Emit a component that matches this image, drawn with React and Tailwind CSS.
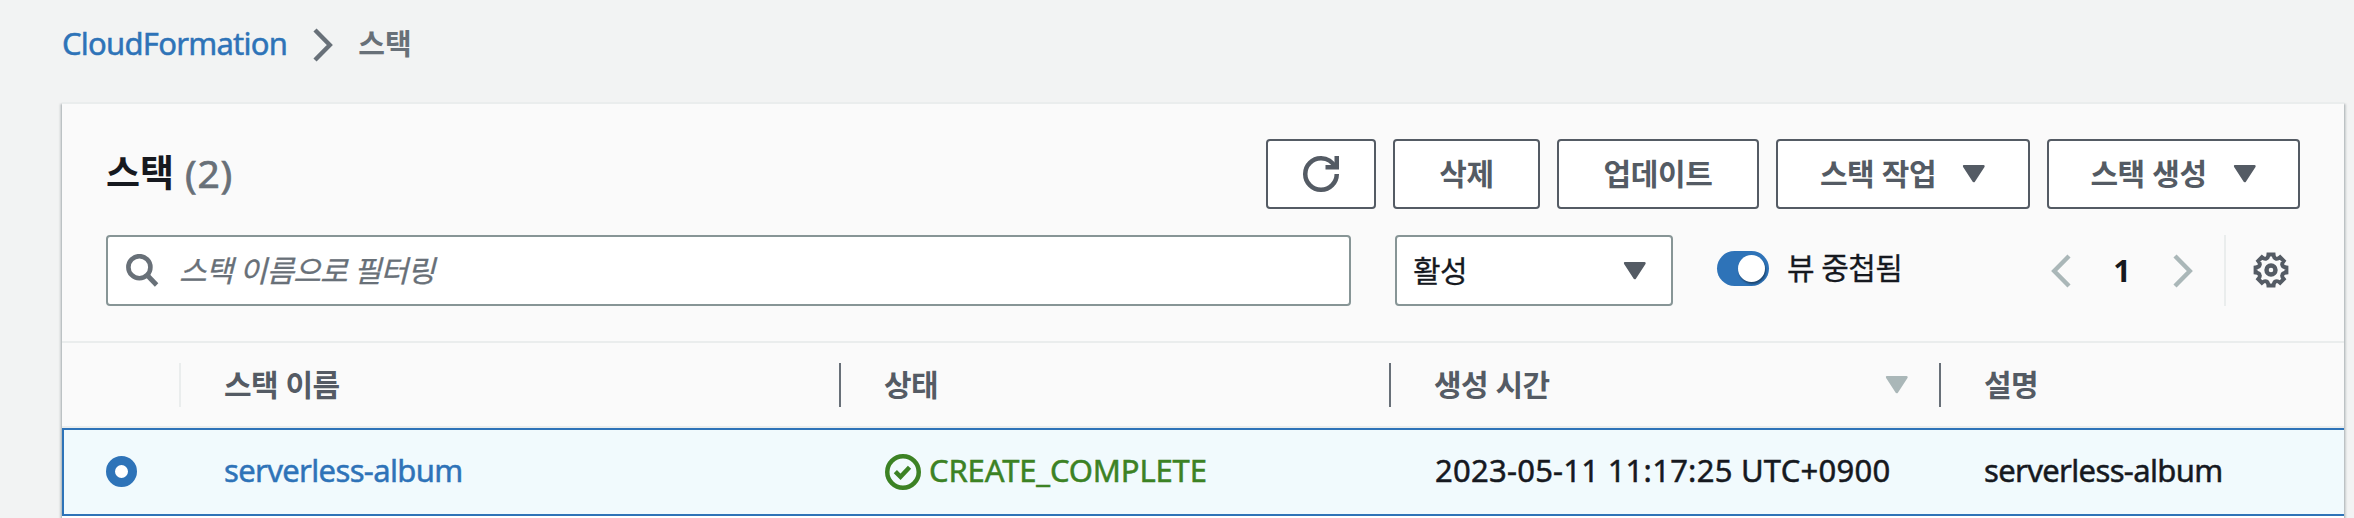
function Chevron({ direction = 'right', className = '' }) {
  return (
    <svg width="20" height="34" viewBox="0 0 20 34" fill="none" className={className}>
      <path
        d={direction === 'right' ? 'M2 2l14.8 15L2 32' : 'M18 2L3.2 17 18 32'}
        stroke="currentColor"
        strokeWidth="4.4"
      />
    </svg>
  );
}

function Caret({ className = '' }) {
  return (
    <svg width="24" height="20" viewBox="0 0 24 20" className={className}>
      <path d="M2.2 2.2h19.2L11.8 17z" fill="currentColor" stroke="currentColor" strokeWidth="2.6" strokeLinejoin="round" />
    </svg>
  );
}

function RefreshIcon() {
  return (
    <svg width="36" height="36" viewBox="0 0 16 16" fill="none" stroke="currentColor" strokeWidth="2">
      <path d="M10 5h5V0" />
      <path d="M15 8a6.957 6.957 0 0 1-7 7 6.957 6.957 0 0 1-7-7 6.957 6.957 0 0 1 7-7 6.87 6.87 0 0 1 6.3 4" />
    </svg>
  );
}

function SearchIcon() {
  return (
    <svg width="33" height="33" viewBox="0 0 33 33" fill="none" stroke="currentColor" className="shrink-0">
      <circle cx="13.4" cy="13.2" r="11" strokeWidth="4.6" />
      <path d="M21 21l9.6 10" strokeWidth="4.8" />
    </svg>
  );
}

function CheckIcon() {
  return (
    <svg width="36" height="36" viewBox="0 0 16 16" fill="none" stroke="currentColor" strokeWidth="2" className="shrink-0">
      <circle cx="8" cy="8" r="7" />
      <path d="M4.6 7.8l2.3 2.3 4-4.2" />
    </svg>
  );
}

const gearPoint = (degrees, radius) => {
  const a = (degrees * Math.PI) / 180;
  return `${(18 + radius * Math.sin(a)).toFixed(2)} ${(18 - radius * Math.cos(a)).toFixed(2)}`;
};

const gearPath =
  Array.from({ length: 8 }, (_, i) => {
    const c = i * 45;
    return `${i ? 'L' : 'M'}${gearPoint(c - 9.5, 15.6)}L${gearPoint(c + 9.5, 15.6)}Q${gearPoint(c + 14, 12.2)} ${gearPoint(c + 22.5, 12.4)}Q${gearPoint(c + 31, 12.2)} ${gearPoint(c + 35.5, 15.6)}`;
  }).join('') + 'Z';

function GearIcon() {
  return (
    <svg width="36" height="36" viewBox="0 0 36 36" fill="none" stroke="currentColor">
      <path d={gearPath} strokeWidth="4" />
      <circle cx="18" cy="18" r="4.5" strokeWidth="4.4" />
    </svg>
  );
}

function Button({ className, children }) {
  return (
    <button
      className={`flex h-[70px] items-center justify-center rounded-[4px] border-2 border-[#545b64] bg-white text-[30px] font-bold tracking-[-0.4px] text-[#545b64] ${className}`}
    >
      {children}
    </button>
  );
}

function HeaderCell({ label, divider = 'border-[#687078]', last = false, sort = false }) {
  return (
    <div
      className={`flex h-[44px] items-center pl-[43px] text-[30px] font-bold tracking-[-0.5px] text-[#545b64] ${last ? '' : 'border-r-2'} ${divider}`}
    >
      {label}
      {sort && <Caret className="mr-[30px] ml-auto text-[#aab7b8]" />}
    </div>
  );
}

const columns = 'grid grid-cols-[119px_660px_550px_550px_403px] items-center';

export default function App() {
  return (
    <div className="h-[518px] w-[2354px] overflow-hidden bg-[#f2f3f3] font-['Noto_Sans','Noto_Sans_CJK_KR',sans-serif] leading-none whitespace-nowrap text-[#16191f]">
      <nav className="flex h-[87px] items-center pl-[62px]">
        <a className="text-[31px] tracking-[-0.75px] text-[#2e73b8] [-webkit-text-stroke:0.5px]">CloudFormation</a>
        <Chevron className="mt-[2px] ml-[26px] text-[#687078]" />
        <span className="ml-[25px] text-[29px] font-bold text-[#687078]">스택</span>
      </nav>

      <main className="mt-[15px] ml-[62px] h-[460px] w-[2282px] border-t-2 border-[#eaeded] bg-[#fafafa] shadow-[0_2px_2px_0_#001c244d,2px_2px_2px_0_#001c2426,-2px_2px_2px_0_#001c2426]">
        <div className="px-[44px] pt-[35px] pb-[35px]">
          <div className="flex h-[70px] items-center">
            <h1 className="flex items-center gap-[11px] pb-[4px]">
              <span className="text-[37px] font-bold">스택</span>
              <span className="text-[39px] tracking-[0.7px] text-[#687078] [-webkit-text-stroke:0.7px]">(2)</span>
            </h1>
            <div className="ml-auto flex gap-[17px]">
              <Button className="w-[110px]"><RefreshIcon /></Button>
              <Button className="w-[147px]">삭제</Button>
              <Button className="w-[202px]">업데이트</Button>
              <Button className="w-[254px] gap-[26px]">스택 작업<Caret /></Button>
              <Button className="w-[253px] gap-[26px]">스택 생성<Caret /></Button>
            </div>
          </div>

          <div className="mt-[26px] flex h-[71px] items-center">
            <div className="flex h-full w-[1245px] items-center rounded-[4px] border-2 border-[#879596] bg-white pl-[18px] text-[#687078]">
              <SearchIcon />
              <span className="ml-[20px] text-[30px] tracking-[-0.8px] italic [-webkit-text-stroke:0.3px]">스택 이름으로 필터링</span>
            </div>
            <div className="ml-[44px] flex h-full w-[278px] items-center justify-between rounded-[4px] border-2 border-[#879596] bg-white pr-[24px] pl-[16px] text-[30px] tracking-[-0.5px]">
              <span className="[-webkit-text-stroke:0.3px]">활성</span>
              <Caret className="text-[#545b64]" />
            </div>
            <div className="ml-[44px] flex items-center pb-[4px]">
              <div className="flex h-[35px] w-[52px] items-center justify-end rounded-full bg-[#2e73b8] pr-[4px]">
                <div className="size-[27px] rounded-full bg-white shadow-[1px_2px_2px_0_#00000066]" />
              </div>
              <span className="ml-[18px] pb-[2px] text-[30px] tracking-[-0.6px] [-webkit-text-stroke:0.3px]">뷰 중첩됨</span>
            </div>
            <div className="ml-auto flex h-full items-center">
              <Chevron direction="left" className="text-[#aab7b8]" />
              <span className="w-[102px] text-center text-[31px] font-bold">1</span>
              <Chevron className="text-[#aab7b8]" />
              <div className="ml-[31px] h-full w-[2px] bg-[#eaeded]" />
              <div className="mr-[11px] ml-[27px] pb-[1px] text-[#545b64]"><GearIcon /></div>
            </div>
          </div>
        </div>

        <div className={`${columns} h-[87px] border-y-2 border-[#eaeded]`}>
          <HeaderCell divider="border-[#eaeded]" />
          <HeaderCell label="스택 이름" />
          <HeaderCell label="상태" />
          <HeaderCell label="생성 시간" sort />
          <HeaderCell label="설명" last />
        </div>

        <div className={`${columns} h-[88px] border-y-2 border-[#2e73b8] bg-[#f1fafd] text-[31px]`}>
          <div className="flex h-[84px] items-center border-l-2 border-[#2e73b8] pb-[1px] pl-[42px]">
            <span className="size-[31px] rounded-full border-[9px] border-[#2e73b8] bg-white" />
          </div>
          <a className="pb-[4px] pl-[43px] tracking-[-0.65px] text-[#2e73b8] [-webkit-text-stroke:0.5px]">serverless-album</a>
          <div className="flex items-center gap-[8px] pl-[44px] text-[#3c8224]">
            <CheckIcon />
            <span className="pb-[4px] tracking-[-0.15px] [-webkit-text-stroke:0.5px]">CREATE_COMPLETE</span>
          </div>
          <span className="pb-[4px] pl-[44px] tracking-[0.25px] [-webkit-text-stroke:0.5px]">2023-05-11 11:17:25 UTC+0900</span>
          <span className="pb-[4px] pl-[43px] tracking-[-0.65px] [-webkit-text-stroke:0.5px]">serverless-album</span>
        </div>
        <div className="h-[10px] bg-white" />
      </main>
    </div>
  );
}
